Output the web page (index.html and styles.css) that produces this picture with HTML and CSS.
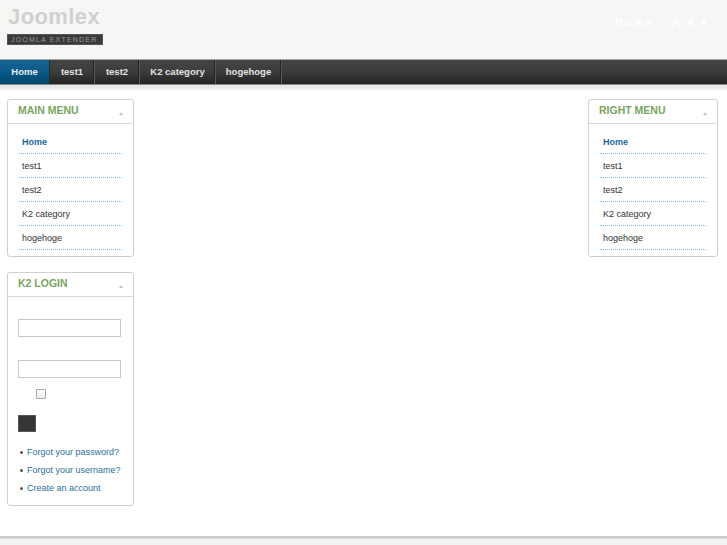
FILE: index.html
```
<!DOCTYPE html>
<html>
<head>
<meta charset="utf-8">
<link rel="stylesheet" href="styles.css">
</head>
<body>
<div class="page">
  <header class="header">
    <div class="brand">
      <div class="logo">Joomlex</div>
      <div class="tagline">JOOMLA EXTENDER</div>
    </div>
    <div class="tools">
      <span class="tool-home">Home</span>
      <span class="tool-a a1">A</span><span class="tool-a a2">A</span><span class="tool-a a3">A</span>
    </div>
  </header>
  <nav class="nav">
    <a class="nav-item active">Home</a>
    <a class="nav-item">test1</a>
    <a class="nav-item">test2</a>
    <a class="nav-item">K2 category</a>
    <a class="nav-item">hogehoge</a>
  </nav>
  <div class="nav-shadow"></div>
  <main class="main">
    <aside class="col col-left">
      <section class="module">
        <div class="module-head"><span class="module-title">MAIN MENU</span><span class="toggle"></span></div>
        <ul class="menu">
          <li class="current">Home</li>
          <li>test1</li>
          <li>test2</li>
          <li>K2 category</li>
          <li>hogehoge</li>
        </ul>
      </section>
      <section class="module login">
        <div class="module-head"><span class="module-title">K2 LOGIN</span><span class="toggle"></span></div>
        <div class="login-body">
          <input class="field" type="text">
          <input class="field field2" type="password">
          <span class="check"></span>
          <span class="submit"></span>
          <ul class="links">
            <li>Forgot your password?</li>
            <li>Forgot your username?</li>
            <li>Create an account</li>
          </ul>
        </div>
      </section>
    </aside>
    <div class="content"></div>
    <aside class="col col-right">
      <section class="module">
        <div class="module-head"><span class="module-title">RIGHT MENU</span><span class="toggle"></span></div>
        <ul class="menu">
          <li class="current">Home</li>
          <li>test1</li>
          <li>test2</li>
          <li>K2 category</li>
          <li>hogehoge</li>
        </ul>
      </section>
    </aside>
  </main>
  <footer class="footer"></footer>
</div>
</body>
</html>
```

FILE: styles.css
```
* { box-sizing: border-box; }
html, body { margin: 0; padding: 0; }
body {
  font-family: "Liberation Sans", Arial, sans-serif;
  background: #f3f3f3;
  width: 727px;
  height: 545px;
  overflow: hidden;
}
.page { display: flex; flex-direction: column; }

.header {
  height: 59px;
  background: #f6f7f5;
  display: flex;
  justify-content: space-between;
  padding: 6px 0 0 7px;
}
.logo {
  font-size: 22px;
  font-weight: bold;
  color: #d0d0d0;
  line-height: 21px;
  padding-left: 1px;
  letter-spacing: 0.4px;
}
.tagline {
  margin-top: 7px;
  width: 96px;
  height: 11px;
  background: #3a3a3a;
  border: 1px solid #555;
  color: #9a9a9a;
  font-size: 7px;
  line-height: 9px;
  letter-spacing: 1.2px;
  padding-left: 3px;
  white-space: nowrap;
}
.tools {
  padding: 9px 20px 0 0;
  color: #ffffff;
  font-size: 11px;
  font-weight: bold;
  display: flex;
  align-items: baseline;
  gap: 6px;
}
.tool-home { margin-right: 12px; letter-spacing: 2px; }
.tool-a.a1 { font-size: 12px; }
.tool-a.a2 { font-size: 11px; }
.tool-a.a3 { font-size: 9px; }

.nav {
  height: 26px;
  display: flex;
  background: linear-gradient(#444 0%, #3c3c3c 50%, #2a2a2a 85%, #222 100%);
  border-top: 1px solid #a8a8a8;
  border-bottom: 1px solid #8a8a8a;
}
.nav-item {
  display: block;
  height: 24px;
  line-height: 24px;
  color: #e2e2e2;
  font-size: 9.5px;
  font-weight: bold;
  text-align: center;
  border-right: 1px solid #5a5a5a;
  box-shadow: inset -1px 0 0 #222;
}
.nav-item:nth-child(1) { width: 50px; }
.nav-item:nth-child(2) { width: 45px; }
.nav-item:nth-child(3) { width: 45px; }
.nav-item:nth-child(4) { width: 76px; }
.nav-item:nth-child(5) { width: 66px; }
.nav-item.active {
  background: linear-gradient(#136595, #0a5784 55%, #014570);
  color: #e8eef2;
  border-right: 1px solid #2c2c2c;
  box-shadow: none;
}
.nav-shadow {
  height: 5px;
  background: linear-gradient(#e3e3e3, #f0f0f0);
}

.main {
  height: 446px;
  background: #ffffff;
  display: flex;
  padding: 9px 9px 0 7px;
}
.content { flex: 1; }
.col-left { width: 127px; }
.col-right { width: 130px; }

.module {
  border: 1px solid #cfcfcf;
  border-radius: 3px;
  background: #fff;
  margin-bottom: 15px;
}
.module-head {
  height: 24px;
  border-bottom: 1px solid #d8d8d8;
  display: flex;
  align-items: center;
  justify-content: space-between;
  padding: 0 10px 3px 10px;
}
.module-title {
  color: #79a560;
  font-size: 10.5px;
  font-weight: bold;
}
.toggle {
  width: 0; height: 0;
  border-left: 2.5px solid transparent;
  border-right: 2.5px solid transparent;
  border-bottom: 3px solid #c4c4c4;
  margin-top: 6px;
}

.menu {
  list-style: none;
  margin: 0;
  padding: 6px 11px 6px 11px;
}
.menu li {
  height: 24px;
  line-height: 24px;
  font-size: 9px;
  color: #333;
  padding-left: 3px;
  border-bottom: 1px dotted #7db8de;
}
.menu li.current {
  color: #16679b;
  font-weight: bold;
}

.login-body {
  padding: 22px 12px 8px 10px;
  display: flex;
  flex-direction: column;
  align-items: flex-start;
}
.field {
  width: 103px;
  height: 18px;
  border: 1px solid #c8c8c8;
  background: #fff;
  margin: 0;
  padding: 0;
  display: block;
}
.field2 { margin-top: 23px; }
.check {
  display: block;
  width: 10px;
  height: 10px;
  border: 1px solid #aaa;
  border-radius: 1px;
  background: linear-gradient(#fff, #eee);
  margin: 11px 0 0 18px;
}
.submit {
  display: block;
  width: 18px;
  height: 17px;
  background: #353535;
  border: 1px solid #555;
  margin-top: 16px;
}
.links {
  list-style: none;
  margin: 11px 0 0 0;
  padding: 0;
}
.links li {
  position: relative;
  font-size: 9px;
  line-height: 18px;
  color: #2a6f9c;
  padding-left: 9px;
}
.links li::before {
  content: "";
  position: absolute;
  left: 2px;
  top: 8px;
  width: 3px;
  height: 3px;
  background: #555;
  border-radius: 50%;
}

.footer {
  height: 3px;
  background: #cbcbcb;
  border-bottom: 1px solid #d8d8d8;
}
```
